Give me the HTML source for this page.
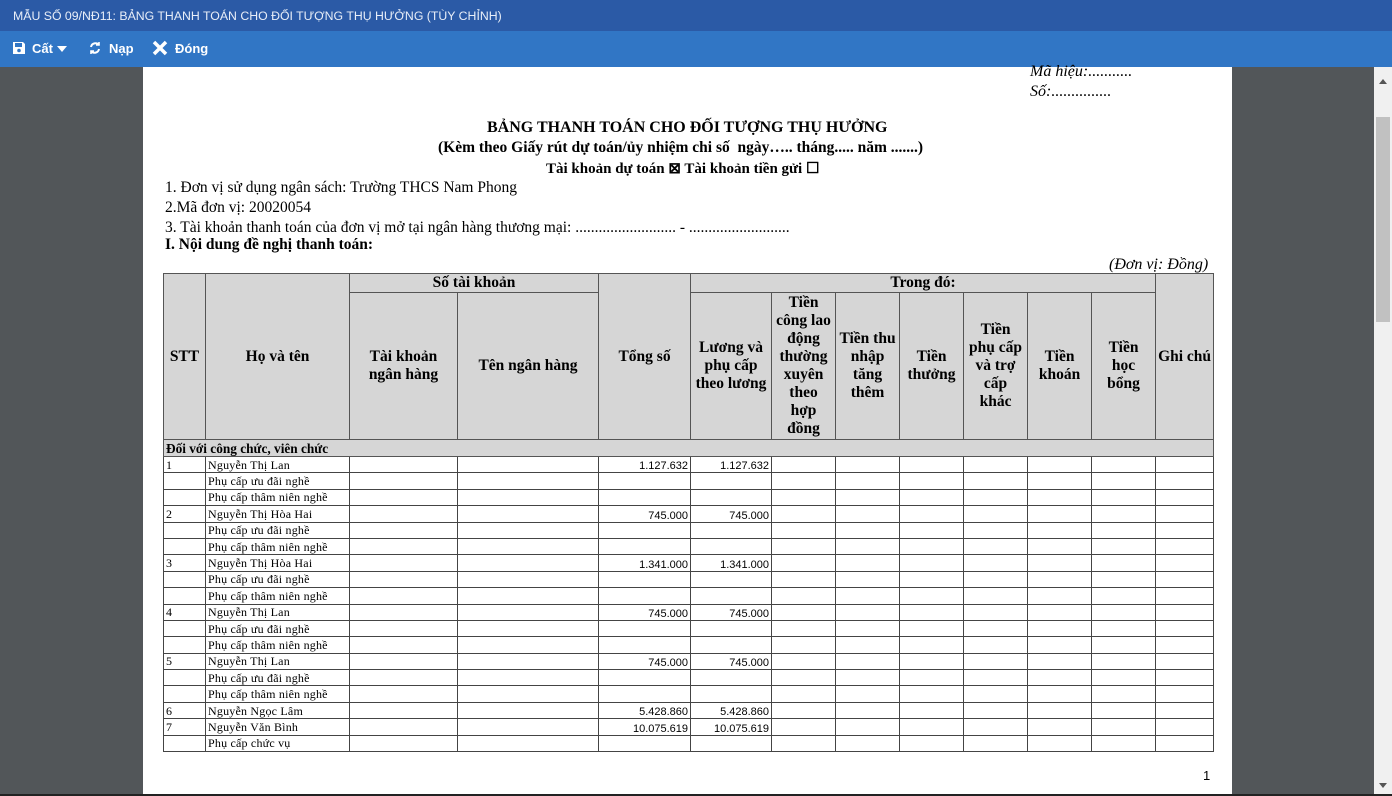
<!DOCTYPE html>
<html><head><meta charset="utf-8"><style>
*{margin:0;padding:0;box-sizing:border-box}
html,body{width:1392px;height:796px;overflow:hidden}
body{background:#525659;position:relative;font-family:"Liberation Serif",serif}
#tb{position:absolute;left:0;top:0;width:1392px;height:31px;background:#2b5aa6;color:#e8eef8;font:12.3px "Liberation Sans",sans-serif;padding:9px 0 0 13px}
#tl{position:absolute;left:0;top:31px;width:1392px;height:36px;background:#3176c5;color:#fff;font:bold 13px "Liberation Sans",sans-serif}
#tl span{position:absolute;top:10px}
#page{position:absolute;left:143px;top:67px;width:1089px;height:729px;background:#fff}
#sb{position:absolute;left:1374px;top:67px;width:18px;height:729px;background:#f0f0f0}
#thumb{position:absolute;left:2px;top:50px;width:14px;height:205px;background:#c1c1c1}
.t{position:absolute;white-space:nowrap;color:#000}
table{position:absolute;left:163px;top:273px;border-collapse:collapse;table-layout:fixed;width:1050px}
td{border:1px solid #444;padding:0 2px;overflow:hidden;white-space:nowrap}
th{border:1.5px solid #555;background:#d6d6d6;font:bold 15.5px/18px "Liberation Serif",serif;text-align:center;vertical-align:middle;padding:0}
tr.d td{height:16.4px;font:12px/14px "Liberation Serif",serif;letter-spacing:0.2px}
td.n{text-align:right;font:11px "Liberation Sans",sans-serif !important;letter-spacing:0 !important;vertical-align:bottom}
</style></head><body>
<div id="tb">MẪU SỐ 09/NĐ11: BẢNG THANH TOÁN CHO ĐỐI TƯỢNG THỤ HƯỞNG (TÙY CHỈNH)</div>
<div id="tl">
<svg style="position:absolute;left:12px;top:10px" width="14" height="14" viewBox="0 0 14 14"><path d="M1 1h10l2 2v10H1z" fill="#fff"/><rect x="3" y="2" width="7" height="4" fill="#3176c5"/><circle cx="7" cy="9.5" r="1.8" fill="#3176c5"/></svg>
<span style="left:32px">Cất</span>
<svg style="position:absolute;left:57px;top:15px" width="10" height="6"><path d="M0 0h10L5 6z" fill="#fff"/></svg>
<svg style="position:absolute;left:88px;top:10px" width="14" height="14" viewBox="0 0 14 14" fill="none" stroke="#fff" stroke-width="2"><path d="M3 6a4.5 4.5 0 0 1 8-2M11 8a4.5 4.5 0 0 1-8 2"/><path d="M11 1v3H8M3 13v-3h3" stroke-width="1.6"/></svg>
<span style="left:109px">Nạp</span>
<svg style="position:absolute;left:152px;top:9px" width="16" height="16" viewBox="0 0 16 16"><path d="M2 2L14 14M14 2L2 14" stroke="#fff" stroke-width="3.5"/></svg>
<span style="left:175px">Đóng</span>
</div>
<div id="page"></div>
<div id="sb"><div id="thumb"></div>
<svg style="position:absolute;left:5px;top:12px" width="8" height="5"><path d="M0 5L4 0L8 5z" fill="#555"/></svg>
<svg style="position:absolute;left:5px;top:716px" width="8" height="5"><path d="M0 0L4 5L8 0z" fill="#555"/></svg></div>
<div style="position:absolute;left:0;top:794px;width:1392px;height:2px;background:#222"></div>

<div class="t" style="left:1030px;top:63px;font:italic 16px 'Liberation Serif',serif">Mã hiệu:...........</div>
<div class="t" style="left:1030px;top:83px;font:italic 16px 'Liberation Serif',serif">Số:...............</div>
<div class="t" style="left:487px;top:119px;font:bold 16px 'Liberation Serif',serif">BẢNG THANH TOÁN CHO ĐỐI TƯỢNG THỤ HƯỞNG</div>
<div class="t" style="left:438px;top:139px;font:bold 15.5px 'Liberation Serif',serif">(Kèm theo Giấy rút dự toán/ủy nhiệm chi số&nbsp; ngày….. tháng..... năm .......)</div>
<div class="t" style="left:546px;top:159px;font:bold 15px 'Liberation Serif',serif">Tài khoản dự toán ⊠ Tài khoản tiền gửi ☐</div>
<div class="t" style="left:165px;top:179px;font:15.5px 'Liberation Serif',serif">1. Đơn vị sử dụng ngân sách: Trường THCS Nam Phong</div>
<div class="t" style="left:165px;top:199px;font:15.5px 'Liberation Serif',serif">2.Mã đơn vị: 20020054</div>
<div class="t" style="left:165px;top:219px;font:15.5px 'Liberation Serif',serif">3. Tài khoản thanh toán của đơn vị mở tại ngân hàng thương mại: .......................... - ..........................</div>
<div class="t" style="left:165px;top:236px;font:bold 15.5px 'Liberation Serif',serif">I. Nội dung đề nghị thanh toán:</div>
<div class="t" style="left:1109px;top:256px;font:italic 16px 'Liberation Serif',serif">(Đơn vị: Đồng)</div>
<div class="t" style="left:1203px;top:768px;font:13px 'Liberation Sans',sans-serif">1</div>

<table>
<colgroup><col style="width:42px"><col style="width:144px"><col style="width:108px"><col style="width:141px"><col style="width:92px"><col style="width:81px"><col style="width:64px"><col style="width:64px"><col style="width:64px"><col style="width:64px"><col style="width:64px"><col style="width:64px"><col style="width:58px"></colgroup>
<tr style="height:18px"><th rowspan="2">STT</th><th rowspan="2">Họ và tên</th><th colspan="2">Số tài khoản</th><th rowspan="2">Tổng số</th><th colspan="7">Trong đó:</th><th rowspan="2">Ghi chú</th></tr>
<tr style="height:147px"><th>Tài khoản<br>ngân hàng</th><th>Tên ngân hàng</th><th>Lương và<br>phụ cấp<br>theo lương</th><th>Tiền<br>công lao<br>động<br>thường<br>xuyên<br>theo<br>hợp<br>đồng</th><th>Tiền thu<br>nhập<br>tăng<br>thêm</th><th>Tiền<br>thưởng</th><th>Tiền<br>phụ cấp<br>và trợ<br>cấp<br>khác</th><th>Tiền<br>khoán</th><th>Tiền<br>học<br>bổng</th></tr>
<tr style="height:17px"><td colspan="13" style="background:#d6d6d6;font:bold 13.3px/15px 'Liberation Serif',serif;border:1.5px solid #555">Đối với công chức, viên chức</td></tr>
<tr class="d"><td>1</td><td>Nguyễn Thị Lan</td><td></td><td></td><td class="n">1.127.632</td><td class="n">1.127.632</td><td></td><td></td><td></td><td></td><td></td><td></td><td></td></tr>
<tr class="d"><td></td><td>Phụ cấp ưu đãi nghề</td><td></td><td></td><td></td><td></td><td></td><td></td><td></td><td></td><td></td><td></td><td></td></tr>
<tr class="d"><td></td><td>Phụ cấp thâm niên nghề</td><td></td><td></td><td></td><td></td><td></td><td></td><td></td><td></td><td></td><td></td><td></td></tr>
<tr class="d"><td>2</td><td>Nguyễn Thị Hòa Hai</td><td></td><td></td><td class="n">745.000</td><td class="n">745.000</td><td></td><td></td><td></td><td></td><td></td><td></td><td></td></tr>
<tr class="d"><td></td><td>Phụ cấp ưu đãi nghề</td><td></td><td></td><td></td><td></td><td></td><td></td><td></td><td></td><td></td><td></td><td></td></tr>
<tr class="d"><td></td><td>Phụ cấp thâm niên nghề</td><td></td><td></td><td></td><td></td><td></td><td></td><td></td><td></td><td></td><td></td><td></td></tr>
<tr class="d"><td>3</td><td>Nguyễn Thị Hòa Hai</td><td></td><td></td><td class="n">1.341.000</td><td class="n">1.341.000</td><td></td><td></td><td></td><td></td><td></td><td></td><td></td></tr>
<tr class="d"><td></td><td>Phụ cấp ưu đãi nghề</td><td></td><td></td><td></td><td></td><td></td><td></td><td></td><td></td><td></td><td></td><td></td></tr>
<tr class="d"><td></td><td>Phụ cấp thâm niên nghề</td><td></td><td></td><td></td><td></td><td></td><td></td><td></td><td></td><td></td><td></td><td></td></tr>
<tr class="d"><td>4</td><td>Nguyễn Thị Lan</td><td></td><td></td><td class="n">745.000</td><td class="n">745.000</td><td></td><td></td><td></td><td></td><td></td><td></td><td></td></tr>
<tr class="d"><td></td><td>Phụ cấp ưu đãi nghề</td><td></td><td></td><td></td><td></td><td></td><td></td><td></td><td></td><td></td><td></td><td></td></tr>
<tr class="d"><td></td><td>Phụ cấp thâm niên nghề</td><td></td><td></td><td></td><td></td><td></td><td></td><td></td><td></td><td></td><td></td><td></td></tr>
<tr class="d"><td>5</td><td>Nguyễn Thị Lan</td><td></td><td></td><td class="n">745.000</td><td class="n">745.000</td><td></td><td></td><td></td><td></td><td></td><td></td><td></td></tr>
<tr class="d"><td></td><td>Phụ cấp ưu đãi nghề</td><td></td><td></td><td></td><td></td><td></td><td></td><td></td><td></td><td></td><td></td><td></td></tr>
<tr class="d"><td></td><td>Phụ cấp thâm niên nghề</td><td></td><td></td><td></td><td></td><td></td><td></td><td></td><td></td><td></td><td></td><td></td></tr>
<tr class="d"><td>6</td><td>Nguyễn Ngọc Lâm</td><td></td><td></td><td class="n">5.428.860</td><td class="n">5.428.860</td><td></td><td></td><td></td><td></td><td></td><td></td><td></td></tr>
<tr class="d"><td>7</td><td>Nguyễn Văn Bình</td><td></td><td></td><td class="n">10.075.619</td><td class="n">10.075.619</td><td></td><td></td><td></td><td></td><td></td><td></td><td></td></tr>
<tr class="d"><td></td><td>Phụ cấp chức vụ</td><td></td><td></td><td></td><td></td><td></td><td></td><td></td><td></td><td></td><td></td><td></td></tr>
</table>
</body></html>
